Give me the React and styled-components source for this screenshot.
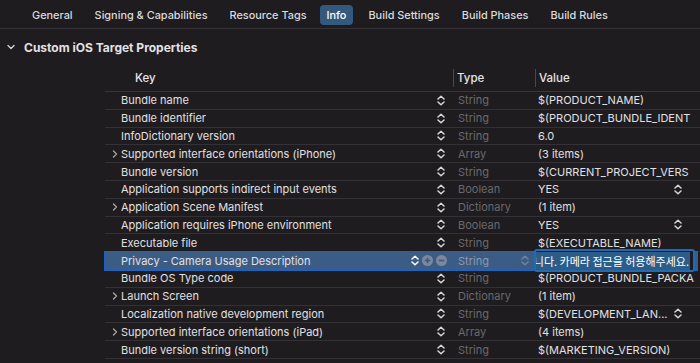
import React from 'react';
import styled, { createGlobalStyle } from 'styled-components';

const Global = createGlobalStyle`
	html, body {
		margin: 0;
		padding: 0;
		background: #1e1c1f;
	}
	body {
		font-family: Inter, "Noto Sans", "Noto Sans CJK KR", sans-serif;
		color: #dedcdf;
		-webkit-font-smoothing: antialiased;
	}
`;

const Page = styled.div`
	width: 700px;
	height: 363px;
	overflow: hidden;
	background: #1e1c1f;
`;

const TabBar = styled.div`
	height: 29px;
	display: flex;
	align-items: center;
	gap: 8px;
	padding-left: 25px;
	padding-top: 1px;
	border-bottom: 1px solid #353337;
	box-sizing: border-box;
`;

const Tab = styled.div`
	font-size: 10.9px;
	font-weight: 500;
	color: ${p => (p.active ? '#ffffff' : '#dcdadd')};
	background: ${p => (p.active ? '#35597d' : 'transparent')};
	border-radius: 4px;
	padding: 3px 7px;
	margin-left: ${p => (p.active ? '-2px' : '0')};
	white-space: nowrap;
`;

const SectionHeader = styled.div`
	height: 36px;
	display: flex;
	align-items: center;
	padding-left: 7px;
	font-size: 12px;
	font-weight: 700;
	color: #e4e2e5;
	svg {
		margin-right: 9px;
	}
`;

const Table = styled.div`
	margin-left: 105px;
`;

const HeadRow = styled.div`
	display: grid;
	grid-template-columns: 348px 82px 1fr;
	height: 26px;
	align-items: center;
	border-bottom: 1px solid #38363a;
	font-size: 11.5px;
	font-weight: 500;
	color: #e6e4e7;
`;

const HeadCell = styled.div`
	height: 18px;
	display: flex;
	align-items: center;
	padding-left: ${p => p.pad}px;
	border-left: ${p => (p.line ? '1px solid #4a484c' : 'none')};
`;

const Row = styled.div`
	display: grid;
	grid-template-columns: 348px 82px 1fr;
	height: 17.8px;
	box-sizing: border-box;
	align-items: center;
	font-size: 11px;
	position: relative;
	border-bottom: 1px solid ${p => (p.selected ? '#1a62c4' : '#333135')};
	background: ${p => (p.selected ? '#3b5c84' : 'transparent')};
	outline: ${p => (p.selected ? '1px solid #1a62c4' : 'none')};
	margin-right: ${p => (p.selected ? '3px' : '0')};
`;

const KeyCell = styled.div`
	display: flex;
	align-items: center;
	padding-left: 6px;
	padding-right: 8px;
	color: #e2e0e3;
	min-width: 0;
`;

const Disclosure = styled.span`
	width: 10px;
	display: inline-flex;
	align-items: center;
	justify-content: flex-start;
	flex: none;
`;

const KeyText = styled.span`
	flex: 1;
	white-space: nowrap;
	overflow: hidden;
`;

const Controls = styled.span`
	display: inline-flex;
	align-items: center;
	gap: 3px;
	margin-right: -2px;
`;

const TypeCell = styled.div`
	display: flex;
	align-items: center;
	justify-content: space-between;
	padding-left: 5px;
	padding-right: 6px;
	color: ${p => (p.selected ? '#8a9ab0' : '#6b696d')};
`;

const ValueCell = styled.div`
	display: flex;
	align-items: center;
	justify-content: space-between;
	padding-left: 3px;
	padding-right: 18px;
	color: #e2e0e3;
	white-space: nowrap;
	overflow: hidden;
`;

const EditBox = styled.div`
	position: absolute;
	left: 429px;
	right: 2px;
	top: -3px;
	bottom: -3px;
	border: 2px solid #1f6cb5;
	border-radius: 3px;
	background: #1e1c1f;
	display: flex;
	align-items: center;
	justify-content: flex-end;
	overflow: hidden;
	padding: 2px 3px;
	box-sizing: border-box;
`;

const SelectedText = styled.span`
	background: #2d5c89;
	color: #ffffff;
	font-size: 11px;
	white-space: nowrap;
	padding: 1px 1px;
	font-family: "Noto Sans CJK KR", Inter, sans-serif;
`;

const Stepper = ({ color = '#d8d6d9' }) => (
	<svg width="8" height="11" viewBox="0 0 8 11">
		<path d="M1 4 L4 1.2 L7 4" fill="none" stroke={color} strokeWidth="1.5" strokeLinecap="round" strokeLinejoin="round" />
		<path d="M1 7 L4 9.8 L7 7" fill="none" stroke={color} strokeWidth="1.5" strokeLinecap="round" strokeLinejoin="round" />
	</svg>
);

const Chevron = ({ down }) => (
	<svg width="8" height="8" viewBox="0 0 8 8">
		<path
			d={down ? 'M1 2.5 L4 5.5 L7 2.5' : 'M2.5 1 L5.5 4 L2.5 7'}
			fill="none"
			stroke={down ? '#d8d6d9' : '#a9a7aa'}
			strokeWidth="1.3"
			strokeLinecap="round"
			strokeLinejoin="round"
		/>
	</svg>
);

const CircleBtn = ({ plus }) => (
	<svg width="11" height="11" viewBox="0 0 11 11">
		<circle cx="5.5" cy="5.5" r="5.5" fill="#7d899b" />
		<path d="M2.8 5.5 H8.2" stroke="#3b5c84" strokeWidth="1.7" />
		{plus && <path d="M5.5 2.8 V8.2" stroke="#3b5c84" strokeWidth="1.7" />}
	</svg>
);

const tabs = [
	{ name: 'General' },
	{ name: 'Signing & Capabilities' },
	{ name: 'Resource Tags' },
	{ name: 'Info', active: true },
	{ name: 'Build Settings' },
	{ name: 'Build Phases' },
	{ name: 'Build Rules' },
];

const rows = [
	{ key: 'Bundle name', type: 'String', value: '$(PRODUCT_NAME)' },
	{ key: 'Bundle identifier', type: 'String', value: '$(PRODUCT_BUNDLE_IDENT' },
	{ key: 'InfoDictionary version', type: 'String', value: '6.0' },
	{ key: 'Supported interface orientations (iPhone)', type: 'Array', value: '(3 items)', expand: true },
	{ key: 'Bundle version', type: 'String', value: '$(CURRENT_PROJECT_VERS' },
	{ key: 'Application supports indirect input events', type: 'Boolean', value: 'YES', pick: true },
	{ key: 'Application Scene Manifest', type: 'Dictionary', value: '(1 item)', expand: true },
	{ key: 'Application requires iPhone environment', type: 'Boolean', value: 'YES', pick: true },
	{ key: 'Executable file', type: 'String', value: '$(EXECUTABLE_NAME)' },
	{ key: 'Privacy - Camera Usage Description', type: 'String', value: '', selected: true },
	{ key: 'Bundle OS Type code', type: 'String', value: '$(PRODUCT_BUNDLE_PACKA' },
	{ key: 'Launch Screen', type: 'Dictionary', value: '(1 item)', expand: true },
	{ key: 'Localization native development region', type: 'String', value: '$(DEVELOPMENT_LAN...', pick: true },
	{ key: 'Supported interface orientations (iPad)', type: 'Array', value: '(4 items)', expand: true },
	{ key: 'Bundle version string (short)', type: 'String', value: '$(MARKETING_VERSION)' },
];

export default function App() {
	return (
		<Page>
			<Global />
			<TabBar>
				{tabs.map(t => (
					<Tab key={t.name} active={t.active}>{t.name}</Tab>
				))}
			</TabBar>
			<SectionHeader>
				<Chevron down />
				Custom iOS Target Properties
			</SectionHeader>
			<Table>
				<HeadRow>
					<HeadCell pad={30}>Key</HeadCell>
					<HeadCell pad={3} line>Type</HeadCell>
					<HeadCell pad={3} line>Value</HeadCell>
				</HeadRow>
				{rows.map(r => (
					<Row key={r.key} selected={r.selected}>
						<KeyCell>
							<Disclosure>{r.expand && <Chevron />}</Disclosure>
							<KeyText>{r.key}</KeyText>
							{r.selected ? (
								<Controls>
									<Stepper color="#ffffff" />
									<CircleBtn plus />
									<CircleBtn />
								</Controls>
							) : (
								<Stepper />
							)}
						</KeyCell>
						<TypeCell selected={r.selected}>
							{r.type}
							{r.selected && <Stepper color="#6f84a0" />}
						</TypeCell>
						<ValueCell>
							{r.value}
							{r.pick && <Stepper />}
						</ValueCell>
						{r.selected && (
							<EditBox>
								<SelectedText>니다. 카메라 접근을 허용해주세요.</SelectedText>
							</EditBox>
						)}
					</Row>
				))}
			</Table>
		</Page>
	);
}
